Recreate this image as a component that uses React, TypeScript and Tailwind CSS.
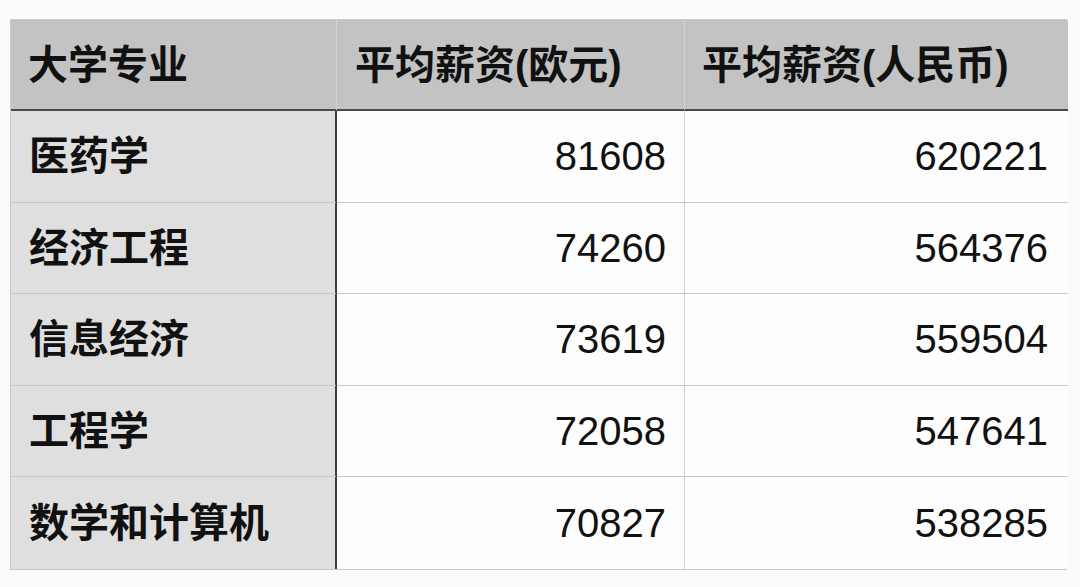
import React from "react";

const rows: [string, string, string][] = [
  ["医药学", "81608", "620221"],
  ["经济工程", "74260", "564376"],
  ["信息经济", "73619", "559504"],
  ["工程学", "72058", "547641"],
  ["数学和计算机", "70827", "538285"],
];

export default function App() {
  return (
    <div
      className="w-[1080px] h-[587px] bg-[#fbfbfb] pt-[19px] pl-[10px]"
      style={{ fontFamily: '"Liberation Sans", "Noto Sans CJK SC", sans-serif' }}
    >
      <div className="w-[1057px] grid grid-cols-[326px_348px_383px] border border-[#c9c9c9] text-[40px] text-[#111]">
        <div className="h-[91px] bg-[#c3c3c3] border-b-2 border-b-[#4a4a4a] border-r border-r-[#d2d2d2] flex items-center pl-[17px] font-bold">
          大学专业
        </div>
        <div className="h-[91px] bg-[#c3c3c3] border-b-2 border-b-[#4a4a4a] border-r border-r-[#d2d2d2] flex items-center pl-[18px] font-bold">
          平均薪资(欧元)
        </div>
        <div className="h-[91px] bg-[#c3c3c3] border-b-2 border-b-[#4a4a4a] flex items-center pl-[17px] font-bold">
          平均薪资(人民币)
        </div>
        {rows.map(([a, b, c], i) => (
          <React.Fragment key={a}>
            <div
              className={`h-[91.5px] bg-[#dfdfdf] border-r-2 border-r-[#3c3c3c] flex items-center pl-[18px] font-bold ${
                i < rows.length - 1 ? "border-b border-b-[#c6c6c6]" : ""
              }`}
            >
              {a}
            </div>
            <div
              className={`h-[91.5px] bg-[#fdfdfd] border-r border-r-[#cfcfcf] flex items-center justify-end pr-[18px] ${
                i < rows.length - 1 ? "border-b border-b-[#c6c6c6]" : ""
              }`}
            >
              {b}
            </div>
            <div
              className={`h-[91.5px] bg-[#fdfdfd] flex items-center justify-end pr-[20px] ${
                i < rows.length - 1 ? "border-b border-b-[#c6c6c6]" : ""
              }`}
            >
              {c}
            </div>
          </React.Fragment>
        ))}
      </div>
    </div>
  );
}
